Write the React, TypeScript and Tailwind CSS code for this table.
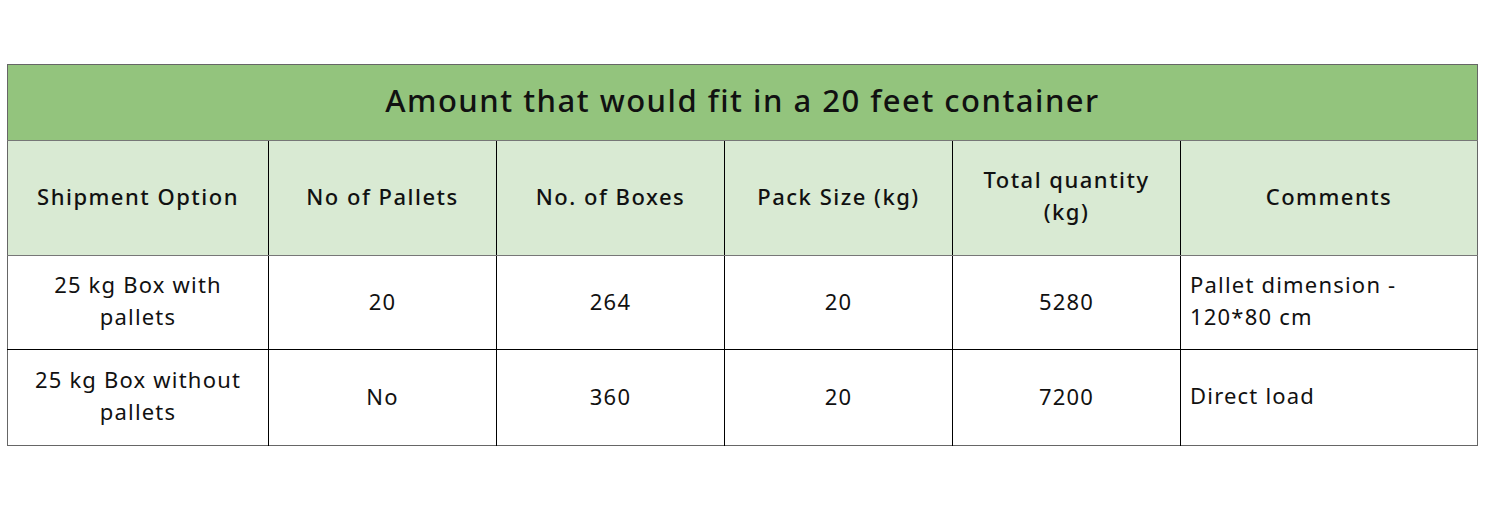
const rows = [
  { option: ["25 kg Box with", "pallets"], pallets: "20", boxes: "264", pack: "20", total: "5280", comment: ["Pallet dimension -", "120*80 cm"], h: "h-[94px]" },
  { option: ["25 kg Box without", "pallets"], pallets: "No", boxes: "360", pack: "20", total: "7200", comment: ["Direct load"], h: "h-[96px]" },
];

const Lines = ({ lines }: { lines: string[] }) => (
  <>
    {lines.map((l, i) => (
      <span key={i} className="block">
        {l}
      </span>
    ))}
  </>
);

export default function App() {
  return (
    <div
      className="min-h-screen bg-white pt-[64px] pl-[7px] text-[#111]"
      style={{ fontFamily: '"Noto Sans", "Open Sans", sans-serif' }}
    >
      <table className="w-[1470px] border-collapse table-fixed border border-[#666]">
        <colgroup>
          <col className="w-[261px]" />
          <col className="w-[228px]" />
          <col className="w-[228px]" />
          <col className="w-[228px]" />
          <col className="w-[228px]" />
          <col className="w-[297px]" />
        </colgroup>
        <thead>
          <tr className="h-[76px] bg-[#93c47d]">
            <th colSpan={6} className="border-b border-[#777] text-[31px] font-medium tracking-[1.5px] pb-[4px]">
              Amount that would fit in a 20 feet container
            </th>
          </tr>
          <tr className="h-[115px] bg-[#d9ead3] text-[22px] tracking-[1.5px] leading-[32px]">
            <th className="border-r border-black border-b border-b-[#777] font-medium pb-[4px]">Shipment Option</th>
            <th className="border-r border-black border-b border-b-[#777] font-medium pb-[4px]">No of Pallets</th>
            <th className="border-r border-black border-b border-b-[#777] font-medium pb-[4px]">No. of Boxes</th>
            <th className="border-r border-black border-b border-b-[#777] font-medium pb-[4px]">Pack Size (kg)</th>
            <th className="border-r border-black border-b border-b-[#777] font-medium pb-[6px]">
              <Lines lines={["Total quantity", "(kg)"]} />
            </th>
            <th className="border-b border-b-[#777] font-medium pb-[4px]">Comments</th>
          </tr>
        </thead>
        <tbody className="text-[22px] tracking-[1.2px] leading-[32px]">
          {rows.map((r, i) => (
            <tr key={i} className={`${r.h} ${i === 0 ? "border-b border-black" : ""}`}>
              <td className="border-r border-black text-center pb-[5px]">
                <Lines lines={r.option} />
              </td>
              <td className="border-r border-black text-center pb-[3px]">{r.pallets}</td>
              <td className="border-r border-black text-center pb-[3px]">{r.boxes}</td>
              <td className="border-r border-black text-center pb-[3px]">{r.pack}</td>
              <td className="border-r border-black text-center pb-[3px]">{r.total}</td>
              <td className="px-[9px] text-left pb-[5px]">
                <Lines lines={r.comment} />
              </td>
            </tr>
          ))}
        </tbody>
      </table>
    </div>
  );
}
